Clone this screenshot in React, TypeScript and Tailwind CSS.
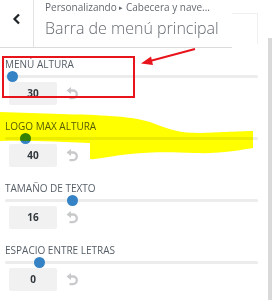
import React from "react";

const sections = [
  { label: "MENÚ ALTURA", value: "30", thumb: 12 },
  { label: "LOGO MAX ALTURA", value: "40", thumb: 25 },
  { label: "TAMAÑO DE TEXTO", value: "16", thumb: 72 },
  { label: "ESPACIO ENTRE LETRAS", value: "0", thumb: 39 },
];

function ResetIcon() {
  return (
    <svg width="12" height="13" viewBox="0 0 12 13" className="shrink-0">
      <path d="M4 3.5 H7 A3.8 3.8 0 0 1 7 11.1 H3.5" fill="none" stroke="#c8c9cb" strokeWidth="2.3" />
      <polygon points="0.5,3.5 5,0 5,7" fill="#c8c9cb" />
    </svg>
  );
}

function Control({ label, value, thumb }: { label: string; value: string; thumb: number }) {
  return (
    <div className="flex flex-col">
      <div className="h-[14px] text-[10px] leading-[14px] text-[#555d66]">{label}</div>
      <div className="relative h-[10px] w-[253px]">
        <div className="absolute left-0 right-0 top-[3.5px] h-[3px] rounded-full bg-[#ececec]" />
        <div
          className="absolute top-[-0.5px] h-[11px] w-[11px] rounded-full bg-[#3582c4]"
          style={{ left: thumb - 5 - 5 }}
        />
      </div>
      <div className="mt-[1px] flex items-center gap-[9px] pl-[4px]">
        <div className="flex h-[23px] w-[48px] items-center justify-center rounded-[2px] bg-[#f1f1f1] text-[10px] font-bold text-[#32373c]">
          {value}
        </div>
        <ResetIcon />
      </div>
    </div>
  );
}

export default function App() {
  return (
    <div
      className="relative flex h-[300px] w-[272px] overflow-hidden bg-white"
      style={{ fontFamily: '"Open Sans", "Noto Sans", sans-serif' }}
    >
      <div className="flex w-[268px] flex-col">
        <div className="flex">
          <div className="flex h-[48px] w-[232px] border-b border-[#dcdcde]">
            <div className="flex w-[34px] items-start justify-center border-r border-[#e2e2e4] pt-[13px]">
              <svg width="10" height="12" viewBox="0 0 10 12">
                <polyline points="7,1.5 2.5,6 7,10.5" fill="none" stroke="#1d2327" strokeWidth="2.2" />
              </svg>
            </div>
            <div className="flex flex-col pl-[11px]">
              <div className="mt-[1px] h-[13px] whitespace-nowrap text-[10px] leading-[13px] text-[#646970]">
                Personalizando <span className="text-[7px] align-[1px]">▸</span> Cabecera y nave...
              </div>
              <div className="mt-[4px] whitespace-nowrap text-[16px] font-light leading-[20px] text-[#646970]">
                Barra de menú principal
              </div>
            </div>
          </div>
          <div className="mt-[13px] h-[31px] w-[26px] border-r border-t border-[#f0f0f0]" />
        </div>
        <div className="flex flex-col gap-[14px] pl-[5px] pt-[9px]">
          {sections.map((s) => (
            <Control key={s.label} {...s} />
          ))}
        </div>
      </div>
      <div className="mt-[38px] w-[4px] bg-[#d9d9d9]" />

      <svg className="pointer-events-none absolute left-0 top-0 mix-blend-multiply" width="272" height="300">
        <path
          d="M0,112 L60,114 C100,115 130,116 150,122 C170,130 180,133 200,133 L250,131 L253,131 L253,148 C240,150 220,154 195,153 C170,152 150,152 130,154 C110,156 95,160 90,159 L90,143 C60,142 30,140 0,141 Z"
          fill="#ffff00"
        />
      </svg>
      <svg className="pointer-events-none absolute left-0 top-0" width="272" height="300">
        <rect x="3" y="57" width="131" height="40" fill="none" stroke="#e8141b" strokeWidth="2" />
        <line x1="195" y1="49" x2="150" y2="61" stroke="#e8141b" strokeWidth="2" />
        <polygon points="141,63.5 151,56.5 153,65" fill="#e8141b" />
      </svg>
    </div>
  );
}
